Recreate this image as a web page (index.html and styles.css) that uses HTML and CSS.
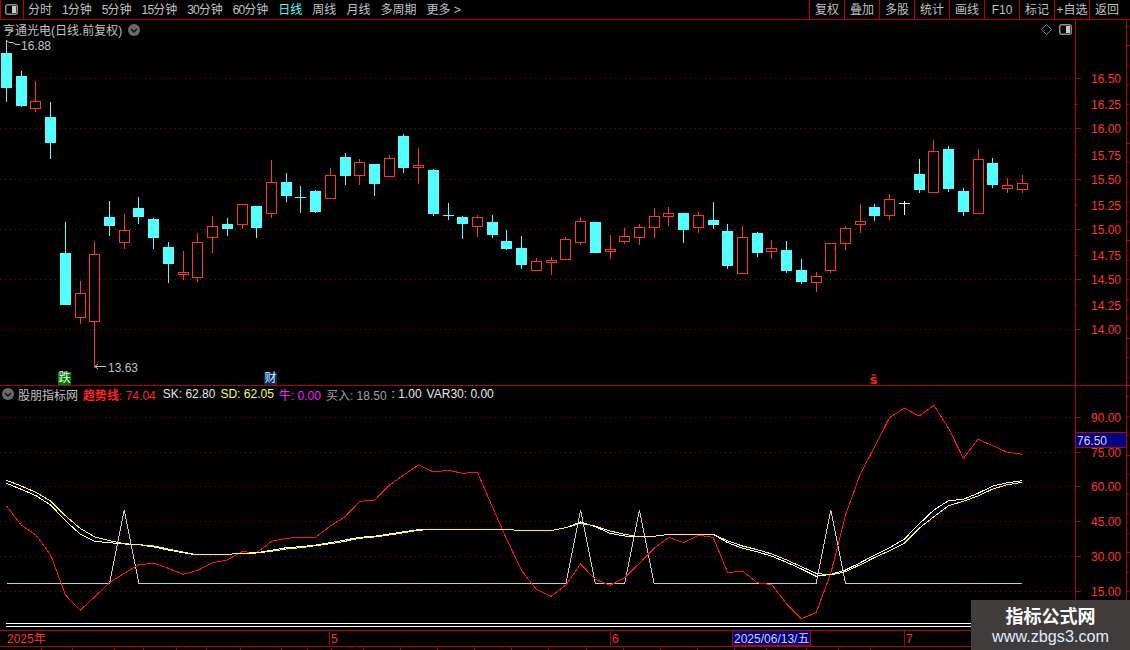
FILE: index.html
```html
<!DOCTYPE html>
<html lang="zh">
<head>
<meta charset="utf-8">
<title>亨通光电 日线</title>
<link rel="stylesheet" href="styles.css">
</head>
<body>
<div class="app">
  <header class="toolbar">
    <button class="layout-btn"><svg class="split-icon" viewBox="0 0 13 11"><rect x="0.75" y="0.75" width="11.5" height="9.5" rx="2" class="split-frame"/><rect x="7" y="2" width="4" height="7" class="split-fill"/></svg></button>
    <nav class="periods">
      <span>分时</span><span><i class="d">1</i>分钟</span><span><i class="d">5</i>分钟</span><span><i class="d">15</i>分钟</span><span><i class="d">30</i>分钟</span><span><i class="d">60</i>分钟</span><span class="active">日线</span><span>周线</span><span>月线</span><span>多周期</span><span>更多 &gt;</span>
    </nav>
    <nav class="actions">
      <span>复权</span><span>叠加</span><span>多股</span><span>统计</span><span>画线</span><span>F10</span><span>标记</span><span>+自选</span><span>返回</span>
    </nav>
  </header>

  <section class="panel price">
    <svg id="priceChart" class="canvas" viewBox="0 20 1130 365"></svg>
    <div class="panel-head">
      <span class="title">亨通光电(日线.前复权)</span>
      <svg class="chev" viewBox="0 0 12 12"><circle cx="6" cy="6" r="6" class="chev-bg"/><path d="M3 5l3 3 3-3" class="chev-line"/></svg>
      <span class="head-tools">
        <svg class="diamond" viewBox="0 0 11 11"><path d="M5.5 0.5l5 5-5 5-5-5z"/></svg>
        <svg class="split-icon" viewBox="0 0 13 11"><rect x="0.75" y="0.75" width="11.5" height="9.5" rx="2" class="split-frame"/><rect x="7" y="2" width="4" height="7" class="split-fill"/></svg>
      </span>
    </div>
    <span class="mark fall">跌</span>
    <span class="mark cai">财</span>
    <span class="mark sell">ŝ</span>
  </section>

  <section class="panel indicator">
    <svg id="indicatorChart" class="canvas" viewBox="0 386 1130 244"></svg>
    <div class="panel-head legend">
      <svg class="chev" viewBox="0 0 12 12"><circle cx="6" cy="6" r="6" class="chev-bg"/><path d="M3 5l3 3 3-3" class="chev-line"/></svg>
      <span class="title">股朋指标网</span>
      <span class="c-red"><b>趋势线</b>: 74.04</span>
      <span class="c-white">SK: 62.80</span>
      <span class="c-yellow">SD: 62.05</span>
      <span class="c-magenta"><i>牛</i>: 0.00</span>
      <span class="c-gray">买入: 18.50</span>
      <span class="c-white">: 1.00</span>
      <span class="c-white">VAR30: 0.00</span>
    </div>
  </section>

  <svg id="timeAxis" class="time-axis" viewBox="0 630 1130 16"></svg>

  <div class="tabs">
    <span>股朋</span><span class="c-white">十</span><span></span><span></span><span></span><span></span><span></span><span></span><span></span><span></span><span></span>
    <span></span><span></span><span></span><span></span><span></span><span></span><span></span><span></span><span></span><span></span>
    <span></span><span class="tab-end">十</span><span class="tab-cyan">周线</span><span></span>
  </div>

  <aside class="watermark">
    <strong>指标公式网</strong>
    <span>www.zbgs3.com</span>
  </aside>
</div>
<script src="chart.js"></script>
</body>
</html>
```
FILE: styles.css
```css
* { box-sizing: border-box; }
html, body { margin: 0; height: 100%; background: #000; }
body { font: 12px "Liberation Sans", "Noto Sans CJK SC", sans-serif; color: #c0c0c0; }

.app {
  position: relative;
  width: 1130px;
  height: 650px;
  overflow: hidden;
  display: flex;
  flex-direction: column;
  background: #000;
}

.toolbar {
  flex: 0 0 20px;
  height: 20px;
  display: flex;
  border-bottom: 1px solid #b00000;
}
.layout-btn {
  width: 24px;
  padding: 0 1px 0 0;
  display: flex;
  align-items: center;
  justify-content: center;
  background: none;
  border: 0;
  border-left: 1px solid #b00000;
  border-right: 1px solid #b00000;
}
.split-icon { width: 13px; height: 11px; display: block; }
.split-frame { fill: none; stroke: #8a8a8a; stroke-width: 1.5; }
.split-fill { fill: #c8c8c8; }

.periods { display: flex; gap: 10px; padding-left: 4px; white-space: nowrap; }
.periods span { line-height: 18px; padding-top: 1px; }
.periods .active { color: #54ffff; }
.periods .d { font-style: normal; letter-spacing: -0.9px; }

.actions { display: flex; margin-left: auto; }
.actions span {
  width: 35px;
  height: 19px;
  line-height: 18px;
  padding-top: 1px;
  text-align: center;
  border-left: 1px solid #b00000;
  white-space: nowrap;
}
.actions span:last-child { width: 41px; padding-right: 6px; }

.panel { position: relative; }
.price { flex: 0 0 366px; border-bottom: 1px solid #b00000; }
.indicator { flex: 0 0 244px; }

.canvas { position: absolute; left: 0; top: 0; width: 1130px; display: block; }
.price .canvas { height: 365px; }
.indicator .canvas { height: 244px; }

.panel-head {
  position: relative;
  height: 19px;
  display: flex;
  align-items: center;
  padding: 0 58px 0 3px;
  white-space: nowrap;
}
.title { color: #c0c0c0; }
.chev { width: 12px; height: 12px; margin-left: 6px; display: block; flex: none; }
.chev-bg { fill: #6a6a6a; }
.chev-line { fill: none; stroke: #111; stroke-width: 1.4; }
.head-tools { margin-left: auto; display: flex; align-items: center; gap: 7px; }
.diamond { width: 11px; height: 11px; display: block; }
.diamond path { fill: none; stroke: #7a7a7a; }

.legend { height: 16px; padding: 0; gap: 5px; }
.legend .chev { margin-left: 2px; margin-right: -1px; }
.legend b { font-weight: 700; }
.legend i { font-style: normal; color: #ff33ff; }
.legend .c-red { margin-right: 2px; }
.c-red { color: #ff2020; }
.c-white { color: #e8e8e8; }
.c-yellow { color: #ffff33; }
.c-magenta { color: #ff20ff; }
.c-gray { color: #a0a0a0; }

.mark {
  position: absolute;
  top: 352px;
  width: 13px;
  height: 13px;
  line-height: 13px;
  font-size: 12px;
  text-align: center;
}
.fall { left: 58px; background: #007a00; color: #e8ffe8; }
.cai { left: 264px; background: #00305f; color: #d8ecff; }
.sell { left: 867px; color: #ff2020; font: 700 13px "DejaVu Sans", sans-serif; }

.time-axis { flex: 0 0 16px; width: 1130px; display: block; }

.tabs {
  flex: 0 0 20px;
  display: grid;
  grid-template-columns: 42px 31px 42px 29px 33px 30px 34px 41px 26px 24px 32px repeat(10, 37.1px) 32px 40px 32px 32px;
  border-top: 1px solid #b00000;
  line-height: 18px;
  color: #e8e8e8;
  padding-top: 1px;
}
.tabs span { border-right: 1px solid #b00000; text-align: center; white-space: nowrap; overflow: hidden; }
.tabs .tab-cyan { color: #54ffff; }

.watermark {
  position: absolute;
  right: 0;
  bottom: 0;
  width: 159px;
  height: 50px;
  background: #413c3c;
  display: flex;
  flex-direction: column;
  align-items: center;
  padding-top: 4px;
  color: #fff;
}
.watermark strong { font: 700 18px/22px "Noto Sans CJK SC", sans-serif; }
.watermark span { font: 16.2px/20px "Liberation Sans", sans-serif; color: #dcecff; }

/* chart primitives */
.grid { stroke: #a00000; stroke-dasharray: 1 4; fill: none; }
.axis { stroke: #b00000; fill: none; }
.ax { fill: #ff3232; font: 12px "Liberation Sans", "Noto Sans CJK SC", sans-serif; }
.wick-up { stroke: #ff3232; shape-rendering: crispEdges; }
.wick-down { stroke: #54ffff; shape-rendering: crispEdges; }
.wick-flat { stroke: #fff; shape-rendering: crispEdges; }
.body-up { fill: #000; stroke: #ff3232; shape-rendering: crispEdges; }
.body-down { fill: #54ffff; shape-rendering: crispEdges; }
.ext { fill: #c0c0c0; font: 12px "Liberation Sans", sans-serif; }
.ext-line { fill: none; stroke: #c0c0c0; }
.line { fill: none; shape-rendering: crispEdges; }
.l-trend { stroke: #ff1414; }
.l-sk { stroke: #fff; }
.l-sd { stroke: #ffff14; }
.l-buy { stroke: #c8c8c8; }
.double { stroke: #fff; shape-rendering: crispEdges; }
.box { fill: #000080; stroke: #c00000; shape-rendering: crispEdges; }
.box-text { fill: #c8d4ff; font: 12px "Liberation Sans", "Noto Sans CJK SC", sans-serif; }
```
FILE: chart.js
```js
// x of the i-th trading day
const dayX = i => 6.5 + i * 14.72;
const snap = v => Math.floor(v) + 0.5;

// high, body top, body bottom, low (screen px), kind: u=up d=down c=doji
const candles = [
  [43,53,87,101,'d'],[71,76,105,106,'d'],[81,101,108,111,'u'],[102,117,142,158,'d'],
  [222,253,304,304,'d'],[281,293,317,323,'u'],[241,254,321,367,'u'],[201,217,225,235,'d'],
  [214,230,242,248,'u'],[197,208,216,223,'d'],[218,219,237,248,'d'],[242,247,263,282,'d'],
  [251,272,274,279,'u'],[233,242,277,281,'u'],[216,226,237,252,'u'],[218,224,228,235,'d'],
  [204,204,224,228,'u'],[206,206,227,237,'d'],[160,182,213,217,'u'],[173,182,195,201,'d'],
  [186,197,197,212,'c'],[190,191,211,212,'d'],[168,175,198,198,'u'],[153,157,175,184,'d'],
  [159,162,175,184,'u'],[164,164,183,195,'d'],[155,158,176,176,'u'],[134,136,167,172,'d'],
  [148,165,167,183,'u'],[169,170,213,215,'d'],[203,215,215,219,'c'],[216,217,223,238,'d'],
  [215,217,226,236,'u'],[215,222,234,237,'d'],[230,241,248,249,'d'],[236,248,264,268,'d'],
  [258,261,270,270,'u'],[257,260,262,274,'u'],[237,239,259,259,'u'],[217,221,242,244,'u'],
  [222,222,252,252,'d'],[235,249,251,258,'u'],[228,236,241,243,'u'],[224,227,237,244,'u'],
  [208,216,227,237,'u'],[207,213,216,225,'u'],[213,213,229,242,'d'],[212,215,227,232,'u'],
  [202,220,224,228,'d'],[224,231,265,268,'d'],[226,237,273,273,'u'],[232,233,252,256,'d'],
  [240,248,251,258,'u'],[241,250,270,272,'d'],[259,270,281,283,'d'],[272,276,282,291,'u'],
  [243,243,270,272,'u'],[226,228,243,249,'u'],[204,221,224,232,'u'],[204,207,215,220,'d'],
  [194,199,215,219,'u'],[201,203,203,214,'w'],[159,174,189,192,'d'],[140,151,192,192,'u'],
  [146,149,188,191,'d'],[188,191,211,215,'d'],[149,159,213,213,'u'],[158,163,184,187,'d'],
  [178,185,188,192,'u'],[175,183,189,192,'u']
];

const trend = [506,525,535,555,595,610.3,596.7,582.7,573.3,564.7,563.3,568.3,574.3,570.3,562.7,560,551.7,552.7,541.3,538.3,537.3,537.3,526,516.7,501.3,500.3,485.3,475,464.7,472,470.3,473.3,472.3,506.7,540,570.7,589.3,596.3,585,564,579.3,585.3,577.7,563.3,548.3,537.3,542.7,535.3,537.3,572.7,571,582.7,584.7,604,618.7,612.7,573.3,515,474,446,417.3,408.3,416,405.3,428.3,458.3,439.3,445.7,452.3,454.3];
const sk = [483.3,489.3,495.7,505,520.7,534,541.3,542.7,544,544.7,547,550,552.7,555,554.7,554.3,553.3,552.7,550.3,547.7,546.7,545,542.7,540,537.3,536.3,534,531.7,529.7,529.3,529.3,529.3,529.3,529.3,529.3,530.7,531,530.5,527.7,522,526.7,533.3,536,537,536.3,534.3,534.3,534.3,534.3,542.7,548.3,551.7,556.3,562.3,569,576.3,574.3,570,562.7,555,547.7,539,524,510,500.7,499.3,493.3,486,482.7,480.7];
const sd = [480.3,486,492.3,501,515.7,528.3,537,540.7,543.7,544.7,546,549,552,555,554.7,554.3,553.3,553,551.3,549,547.7,545.7,543.7,541.3,538.3,537,535,532.7,530.3,529.3,529.3,529.3,529.3,529.3,529.3,530.7,531,530.5,527.7,523.3,526,531,534.3,537,536.3,534.3,534.3,534.3,534.3,541,546,549.7,554,560,566.7,573.3,575,571.7,564.7,557.3,550.7,543.3,528.3,516.7,505.7,501.3,496,489,484.7,482.3];
const spikes = [8, 39, 43, 56];

const text = (x, y, s, cls) => `<text x="${x}" y="${y}" class="${cls}">${s}</text>`;
const hline = (x1, x2, y, cls) => `<path d="M${x1} ${y}H${x2}" class="${cls}"/>`;
const poly = (pts, cls) => `<polyline class="line ${cls}" points="${pts.join(' ')}"/>`;

function axisTicks(top, bottom, labels, minorYs) {
  let s = `<path class="axis" d="M1075.5 ${top}V${bottom}M1126.5 ${top}V${bottom}"/>`;
  labels.forEach(([y, l, major]) => {
    s += hline(1075, major ? 1081 : 1078, y + 0.5, 'axis');
    s += text(1091, y + 5, l, 'ax');
  });
  minorYs.forEach(([y, len]) => { s += hline(1127, 1127 + len, y + 0.5, 'axis'); });
  return s;
}

function drawPrice() {
  let s = '';
  [78, 128, 179, 229, 279, 329].forEach(y => { s += hline(0, 1075, y + 0.5, 'grid'); });
  const minor = [];
  for (let k = -1; k < 18; k++) {
    const y = 45 + k * 19.5;
    minor.push([Math.round(y), k % 5 === 0 ? 4 : 2]);
  }
  s += axisTicks(20, 385, [
    [78,'16.50',1],[104,'16.25',0],[128,'16.00',1],[155,'15.75',0],[179,'15.50',1],[205,'15.25',0],
    [229,'15.00',1],[255,'14.75',0],[279,'14.50',1],[305,'14.25',0],[329,'14.00',1]
  ], minor);

  candles.forEach(([hi, top, bot, lo, k], i) => {
    const x = snap(dayX(i));
    const kind = k === 'u' ? 'up' : k === 'd' ? 'down' : k === 'c' ? 'down' : 'flat';
    s += `<path class="wick-${kind}" d="M${x} ${hi}V${lo + 1}"/>`;
    if (k === 'c' || k === 'w') {
      s += `<path class="wick-${kind}" d="M${x - 5.5} ${top + 0.5}H${x + 5.5}"/>`;
    } else if (k === 'u') {
      s += `<rect class="body-up" x="${x - 5}" y="${top + 0.5}" width="10" height="${bot - top}"/>`;
    } else {
      s += `<rect class="body-down" x="${x - 5.5}" y="${top}" width="11" height="${bot - top + 1}"/>`;
    }
  });

  s += '<path class="ext-line" d="M6.5 44.5V40M6.5 40.5L9 42.5H13L16 44.5H20"/>';
  s += text(21, 50, '16.88', 'ext');
  s += '<path class="ext-line" d="M95 366.5H106M95 366.5L98 364M95 366.5L98 369"/>';
  s += text(108, 372, '13.63', 'ext');
  document.getElementById('priceChart').innerHTML = s;
}

function drawIndicator() {
  let s = '';
  [417, 452, 486, 521, 556, 591].forEach(y => { s += hline(0, 1075, y + 0.5, 'grid'); });
  const minor = [];
  for (let k = 0; k < 13; k++) {
    minor.push([Math.round(396 + k * 19.5), k % 5 === 3 ? 4 : 2]);
  }
  s += axisTicks(386, 630, [
    [417,'90.00',1],[452,'75.00',1],[486,'60.00',1],[521,'45.00',1],[556,'30.00',1],[591,'15.00',1]
  ], minor);

  const xy = (arr) => arr.map((y, i) => `${dayX(i).toFixed(1)},${y}`);
  const buy = candles.map((_, i) => `${dayX(i).toFixed(1)},${spikes.includes(i) ? 510 : 583.5}`);
  s += poly(buy, 'l-buy');
  s += poly(xy(trend), 'l-trend');
  s += poly(xy(sk), 'l-sk');
  s += poly(xy(sd), 'l-sd');

  s += hline(6, 1130, 623.5, 'double');
  s += hline(6, 1130, 626.5, 'double');

  s += '<rect class="box" x="1075.5" y="432.5" width="51" height="15"/>';
  s += text(1077, 445, '76.50', 'box-text');
  document.getElementById('indicatorChart').innerHTML = s;
}

function drawTime() {
  let s = hline(0, 1130, 630.5, 'axis');
  s += text(7, 643, '2025年', 'ax');
  [[329, '5'], [610, '6'], [904, '7']].forEach(([x, l]) => {
    s += `<path class="axis" d="M${x}.5 630V646"/>`;
    s += text(x + 2, 643, l, 'ax');
  });
  s += '<path class="axis" d="M830.5 630V633"/>';
  s += '<rect class="box" x="732.5" y="630.5" width="78" height="15"/>';
  s += text(734, 643, '2025/06/13/五', 'box-text');
  document.getElementById('timeAxis').innerHTML = s;
}

drawPrice();
drawIndicator();
drawTime();
```
